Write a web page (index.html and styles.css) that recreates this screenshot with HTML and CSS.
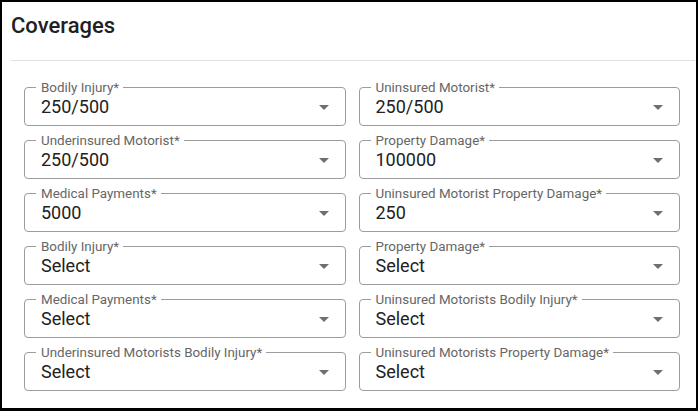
FILE: index.html
```html
<!DOCTYPE html>
<html lang="en">
<head>
<meta charset="utf-8">
<title>Coverages</title>
<link rel="stylesheet" href="styles.css">
</head>
<body>
<div class="card">
  <div class="card-header"><h2 class="title">Coverages</h2></div>
  <div class="fields">
    <fieldset class="field"><legend class="field-label">Bodily Injury*</legend><div class="field-row"><span class="field-value">250/500</span><svg class="arrow" width="10" height="5" viewBox="0 0 10 5"><path d="M0 0h10L5 5z"/></svg></div></fieldset>
    <fieldset class="field"><legend class="field-label">Uninsured Motorist*</legend><div class="field-row"><span class="field-value">250/500</span><svg class="arrow" width="10" height="5" viewBox="0 0 10 5"><path d="M0 0h10L5 5z"/></svg></div></fieldset>
    <fieldset class="field"><legend class="field-label">Underinsured Motorist*</legend><div class="field-row"><span class="field-value">250/500</span><svg class="arrow" width="10" height="5" viewBox="0 0 10 5"><path d="M0 0h10L5 5z"/></svg></div></fieldset>
    <fieldset class="field"><legend class="field-label">Property Damage*</legend><div class="field-row"><span class="field-value">100000</span><svg class="arrow" width="10" height="5" viewBox="0 0 10 5"><path d="M0 0h10L5 5z"/></svg></div></fieldset>
    <fieldset class="field"><legend class="field-label">Medical Payments*</legend><div class="field-row"><span class="field-value">5000</span><svg class="arrow" width="10" height="5" viewBox="0 0 10 5"><path d="M0 0h10L5 5z"/></svg></div></fieldset>
    <fieldset class="field"><legend class="field-label">Uninsured Motorist Property Damage*</legend><div class="field-row"><span class="field-value">250</span><svg class="arrow" width="10" height="5" viewBox="0 0 10 5"><path d="M0 0h10L5 5z"/></svg></div></fieldset>
    <fieldset class="field"><legend class="field-label">Bodily Injury*</legend><div class="field-row"><span class="field-value">Select</span><svg class="arrow" width="10" height="5" viewBox="0 0 10 5"><path d="M0 0h10L5 5z"/></svg></div></fieldset>
    <fieldset class="field"><legend class="field-label">Property Damage*</legend><div class="field-row"><span class="field-value">Select</span><svg class="arrow" width="10" height="5" viewBox="0 0 10 5"><path d="M0 0h10L5 5z"/></svg></div></fieldset>
    <fieldset class="field"><legend class="field-label">Medical Payments*</legend><div class="field-row"><span class="field-value">Select</span><svg class="arrow" width="10" height="5" viewBox="0 0 10 5"><path d="M0 0h10L5 5z"/></svg></div></fieldset>
    <fieldset class="field"><legend class="field-label">Uninsured Motorists Bodily Injury*</legend><div class="field-row"><span class="field-value">Select</span><svg class="arrow" width="10" height="5" viewBox="0 0 10 5"><path d="M0 0h10L5 5z"/></svg></div></fieldset>
    <fieldset class="field"><legend class="field-label">Underinsured Motorists Bodily Injury*</legend><div class="field-row"><span class="field-value">Select</span><svg class="arrow" width="10" height="5" viewBox="0 0 10 5"><path d="M0 0h10L5 5z"/></svg></div></fieldset>
    <fieldset class="field"><legend class="field-label">Uninsured Motorists Property Damage*</legend><div class="field-row"><span class="field-value">Select</span><svg class="arrow" width="10" height="5" viewBox="0 0 10 5"><path d="M0 0h10L5 5z"/></svg></div></fieldset>
  </div>
</div>
</body>
</html>
```
FILE: styles.css
```css
* { box-sizing: border-box; }
html, body { margin: 0; padding: 0; background: #fff; }
body { font-family: Roboto, "Noto Sans", Arial, sans-serif; }

.card {
  width: 698px;
  height: 411px;
  border: 2px solid #000;
  border-bottom-width: 3px;
  background: #fff;
  overflow: hidden;
}

.card-header {
  margin-left: 9px;
  margin-right: 1px;
  padding: 11px 0 21px 0;
  border-bottom: 1px solid #e0e0e0;
}

.title {
  margin: 0;
  font-size: 22px;
  line-height: 26px;
  font-weight: 500;
  color: #212121;
}

.fields {
  display: grid;
  grid-template-columns: 1fr 1fr;
  column-gap: 13px;
  row-gap: 7px;
  padding: 19px 16px 0 22px;
}

.field {
  margin: 0;
  min-width: 0;
  padding: 1px 16px 7px 16px;
  border: 1px solid #9c9c9c;
  border-radius: 4px;
}

.field-label {
  margin-left: -5px;
  padding: 0 4px 0 5px;
  font-size: 13.4px;
  line-height: 15px;
  color: #666;
  white-space: nowrap;
}

.field-row {
  display: flex;
  align-items: center;
  justify-content: space-between;
}

.field-value {
  font-size: 18px;
  line-height: 22px;
  color: #212121;
}

.arrow {
  display: block;
  fill: #6f6f6f;
  flex: none;
}
```
